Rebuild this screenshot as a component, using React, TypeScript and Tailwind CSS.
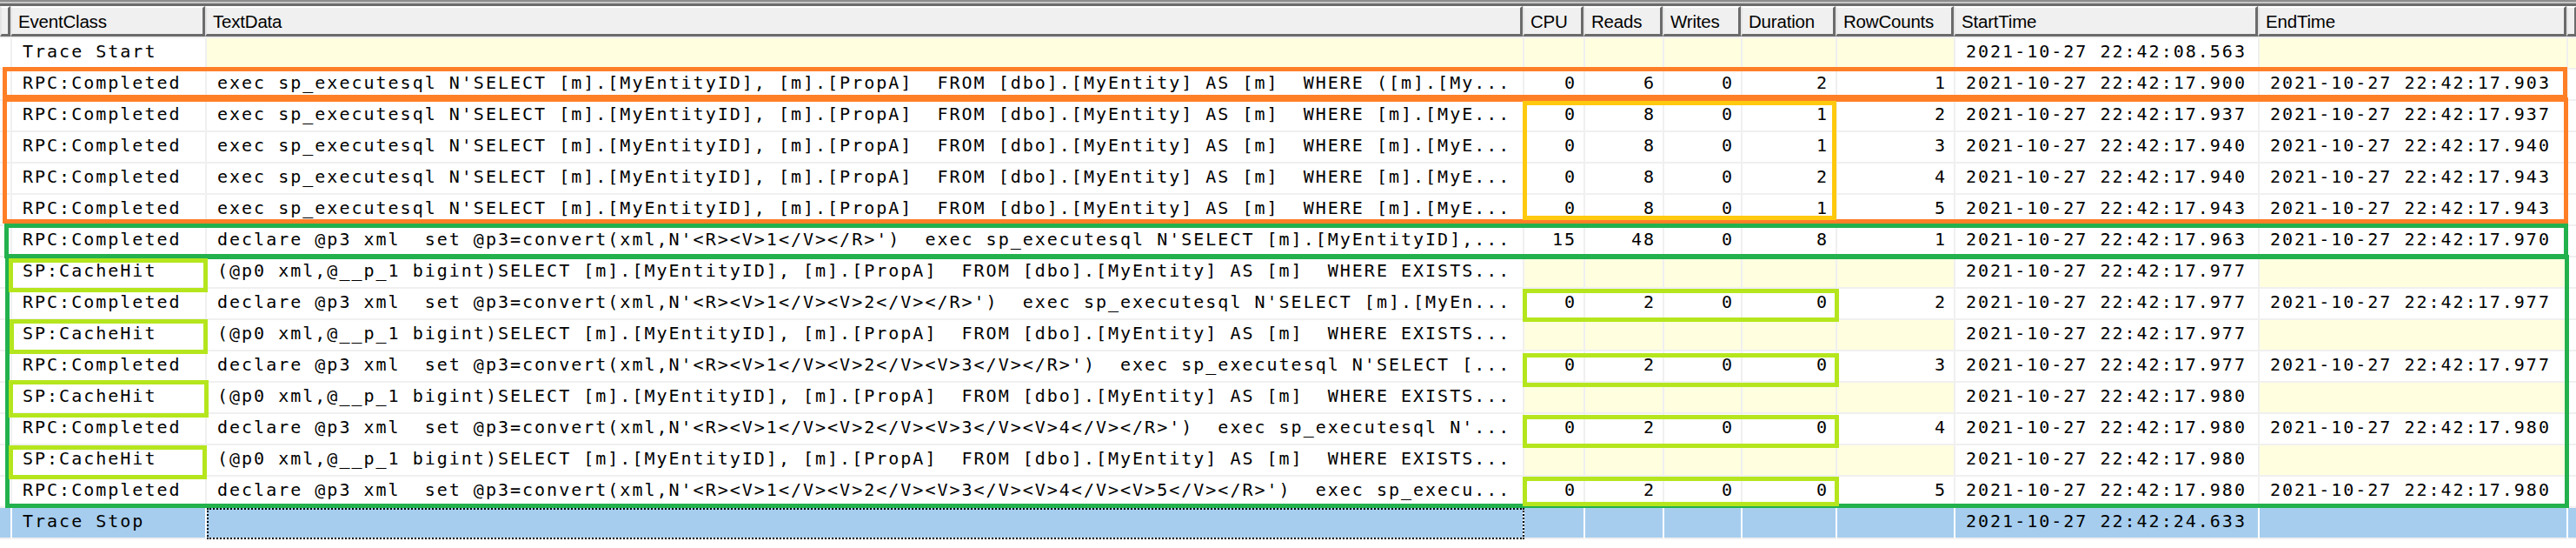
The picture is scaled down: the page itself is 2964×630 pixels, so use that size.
import React from "react";

type Row = {
    ev: string;
    text: string;
    cpu?: string;
    reads?: string;
    writes?: string;
    dur?: string;
    rc?: string;
    start: string;
    end?: string;
    sel?: boolean;
};

const colW = [
    "w-[12px]",
    "w-[224px]",
    "w-[1516px]",
    "w-[70px]",
    "w-[91px]",
    "w-[90px]",
    "w-[109px]",
    "w-[136px]",
    "w-[350px]",
    "w-[355px]",
    "w-[11px]",
];

const headers = ["", "EventClass", "TextData", "CPU", "Reads", "Writes", "Duration", "RowCounts", "StartTime", "EndTime", ""];

const sel1 = "exec sp_executesql N'SELECT [m].[MyEntityID], [m].[PropA]  FROM [dbo].[MyEntity] AS [m]  WHERE ([m].[My...";
const sel2 = "exec sp_executesql N'SELECT [m].[MyEntityID], [m].[PropA]  FROM [dbo].[MyEntity] AS [m]  WHERE [m].[MyE...";
const hit = "(@p0 xml,@__p_1 bigint)SELECT [m].[MyEntityID], [m].[PropA]  FROM [dbo].[MyEntity] AS [m]  WHERE EXISTS...";

const rows: Row[] = [
    { ev: "Trace Start", text: "", start: "2021-10-27 22:42:08.563" },
    { ev: "RPC:Completed", text: sel1, cpu: "0", reads: "6", writes: "0", dur: "2", rc: "1", start: "2021-10-27 22:42:17.900", end: "2021-10-27 22:42:17.903" },
    { ev: "RPC:Completed", text: sel2, cpu: "0", reads: "8", writes: "0", dur: "1", rc: "2", start: "2021-10-27 22:42:17.937", end: "2021-10-27 22:42:17.937" },
    { ev: "RPC:Completed", text: sel2, cpu: "0", reads: "8", writes: "0", dur: "1", rc: "3", start: "2021-10-27 22:42:17.940", end: "2021-10-27 22:42:17.940" },
    { ev: "RPC:Completed", text: sel2, cpu: "0", reads: "8", writes: "0", dur: "2", rc: "4", start: "2021-10-27 22:42:17.940", end: "2021-10-27 22:42:17.943" },
    { ev: "RPC:Completed", text: sel2, cpu: "0", reads: "8", writes: "0", dur: "1", rc: "5", start: "2021-10-27 22:42:17.943", end: "2021-10-27 22:42:17.943" },
    {
        ev: "RPC:Completed",
        text: "declare @p3 xml  set @p3=convert(xml,N'<R><V>1</V></R>')  exec sp_executesql N'SELECT [m].[MyEntityID],...",
        cpu: "15", reads: "48", writes: "0", dur: "8", rc: "1",
        start: "2021-10-27 22:42:17.963", end: "2021-10-27 22:42:17.970",
    },
    { ev: "SP:CacheHit", text: hit, start: "2021-10-27 22:42:17.977" },
    {
        ev: "RPC:Completed",
        text: "declare @p3 xml  set @p3=convert(xml,N'<R><V>1</V><V>2</V></R>')  exec sp_executesql N'SELECT [m].[MyEn...",
        cpu: "0", reads: "2", writes: "0", dur: "0", rc: "2",
        start: "2021-10-27 22:42:17.977", end: "2021-10-27 22:42:17.977",
    },
    { ev: "SP:CacheHit", text: hit, start: "2021-10-27 22:42:17.977" },
    {
        ev: "RPC:Completed",
        text: "declare @p3 xml  set @p3=convert(xml,N'<R><V>1</V><V>2</V><V>3</V></R>')  exec sp_executesql N'SELECT [...",
        cpu: "0", reads: "2", writes: "0", dur: "0", rc: "3",
        start: "2021-10-27 22:42:17.977", end: "2021-10-27 22:42:17.977",
    },
    { ev: "SP:CacheHit", text: hit, start: "2021-10-27 22:42:17.980" },
    {
        ev: "RPC:Completed",
        text: "declare @p3 xml  set @p3=convert(xml,N'<R><V>1</V><V>2</V><V>3</V><V>4</V></R>')  exec sp_executesql N'...",
        cpu: "0", reads: "2", writes: "0", dur: "0", rc: "4",
        start: "2021-10-27 22:42:17.980", end: "2021-10-27 22:42:17.980",
    },
    { ev: "SP:CacheHit", text: hit, start: "2021-10-27 22:42:17.980" },
    {
        ev: "RPC:Completed",
        text: "declare @p3 xml  set @p3=convert(xml,N'<R><V>1</V><V>2</V><V>3</V><V>4</V><V>5</V></R>')  exec sp_execu...",
        cpu: "0", reads: "2", writes: "0", dur: "0", rc: "5",
        start: "2021-10-27 22:42:17.980", end: "2021-10-27 22:42:17.980",
    },
    { ev: "Trace Stop", text: "", start: "2021-10-27 22:42:24.633", sel: true },
];

// hand drawn boxes from the screenshot, on top of the grid
const marks = [
    "left-[3px] top-[77px] w-[2951px] h-[37px] border-[#ff7f27]",
    "left-[3px] top-[112px] w-[2952px] h-[145px] border-[#ff7f27]",
    "left-[5px] top-[257px] w-[2950px] h-[40px] border-[#22b14c]",
    "left-[6px] top-[293px] w-[2950px] h-[291px] border-[#22b14c]",
    "left-[1752px] top-[116px] w-[361px] h-[137px] border-[#ffc90e]",
    "left-[1752px] top-[332px] w-[364px] h-[38px] border-[#b5e61d]",
    "left-[1752px] top-[406px] w-[364px] h-[39px] border-[#b5e61d]",
    "left-[1752px] top-[477px] w-[364px] h-[38px] border-[#b5e61d]",
    "left-[1752px] top-[548px] w-[364px] h-[34px] border-[#b5e61d]",
    "left-[10px] top-[297px] w-[229px] h-[39px] border-[#b5e61d]",
    "left-[11px] top-[367px] w-[228px] h-[40px] border-[#b5e61d]",
    "left-[10px] top-[437px] w-[230px] h-[43px] border-[#b5e61d]",
    "left-[10px] top-[512px] w-[228px] h-[39px] border-[#b5e61d]",
];

const Cell: React.FC<{ i: number; v?: string; right?: boolean; sel?: boolean; yellow?: boolean; focus?: boolean }> = (props) => {
    const bg = props.sel ? "bg-[#a6cdee] border-r-white" : props.yellow ? "bg-[#ffffe0] border-r-[#f0f0f0]" : "bg-white border-r-[#f0f0f0]";
    return (
        <div
            className={`${colW[props.i]} ${bg} ${props.right ? "text-right pr-[8px]" : "pl-[12px]"} ${
                props.focus ? "outline-2 outline-dotted outline-black -outline-offset-2" : ""
            } h-[36px] shrink-0 border-r-2 border-b-2 border-b-[#f0f0f0] overflow-hidden whitespace-pre leading-[31px]`}
        >
            {props.v}
        </div>
    );
};

export default function App() {
    return (
        <div className="relative w-[2964px] h-[630px] bg-white overflow-hidden text-black">
            <div className="h-[2px] bg-[#8c8c8c]" />
            <div className="h-[2px] bg-[#c6c6c6]" />
            <div className="h-[3px] bg-[#6b6b6b]" />
            <div className="flex font-['Liberation_Sans',Arial,sans-serif] text-[20.5px]">
                {headers.map((h, i) => (
                    <div
                        key={i}
                        className={`${colW[i]} h-[35px] shrink-0 overflow-hidden whitespace-nowrap border-t-2 border-l-2 border-r-[3px] border-b-[3px] border-t-white border-l-[#e4e4e4] border-r-[#6b6b6b] border-b-[#6b6b6b] bg-[#f0f0f0] pl-[7px] leading-[32px] tracking-[-0.2px]`}
                    >
                        {h}
                    </div>
                ))}
            </div>
            <div className="h-[2px] bg-[#f0f0f0]" />
            <div className="flex flex-col font-['DejaVu_Sans_Mono',monospace] text-[20px] tracking-[2px]">
                {rows.map((r, k) => (
                    <div key={k} className="flex">
                        <Cell i={0} sel={r.sel} />
                        <Cell i={1} v={r.ev} sel={r.sel} />
                        <Cell i={2} v={r.text} sel={r.sel} yellow={!r.text} focus={r.sel} />
                        <Cell i={3} v={r.cpu} right sel={r.sel} yellow={!r.cpu} />
                        <Cell i={4} v={r.reads} right sel={r.sel} yellow={!r.reads} />
                        <Cell i={5} v={r.writes} right sel={r.sel} yellow={!r.writes} />
                        <Cell i={6} v={r.dur} right sel={r.sel} yellow={!r.dur} />
                        <Cell i={7} v={r.rc} right sel={r.sel} yellow={!r.rc} />
                        <Cell i={8} v={r.start} sel={r.sel} />
                        <Cell i={9} v={r.end} sel={r.sel} yellow={!r.end} />
                        <Cell i={10} sel={r.sel} yellow={k === 0} />
                    </div>
                ))}
            </div>
            {marks.map((m, i) => (
                <div key={i} className={`absolute border-[5px] pointer-events-none ${m}`} />
            ))}
        </div>
    );
}
